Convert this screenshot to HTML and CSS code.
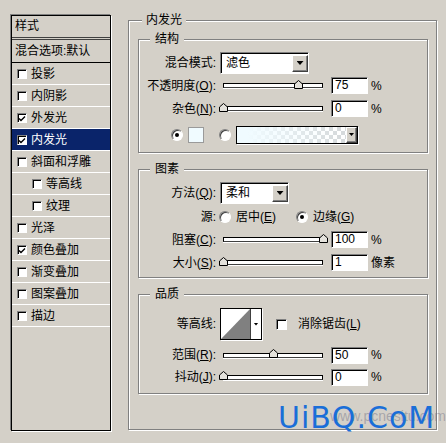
FILE: index.html
```html
<!DOCTYPE html>
<html lang="zh-CN">
<head>
    <meta charset="UTF-8">
    <title>图层样式 - 内发光</title>
    <link rel="stylesheet" href="styles.css">
</head>
<body>
    <div class="dialog">
        <div class="styles">
            <div class="list-head">样式</div>
            <div class="list-blend">混合选项:默认</div>
            <div class="item"><span class="cb"></span>投影</div>
            <div class="item"><span class="cb"></span>内阴影</div>
            <div class="item"><span class="cb"><svg width="8" height="8"><polyline points="1,3.5 3,5.5 7,1.5" fill="none" stroke="#000" stroke-width="1.4"/></svg></span>外发光</div>
            <div class="item active"><span class="cb"><svg width="8" height="8"><polyline points="1,3.5 3,5.5 7,1.5" fill="none" stroke="#000" stroke-width="1.4"/></svg></span>内发光</div>
            <div class="item"><span class="cb"></span>斜面和浮雕</div>
            <div class="item sub"><span class="cb"></span>等高线</div>
            <div class="item sub"><span class="cb"></span>纹理</div>
            <div class="item"><span class="cb"></span>光泽</div>
            <div class="item"><span class="cb"><svg width="8" height="8"><polyline points="1,3.5 3,5.5 7,1.5" fill="none" stroke="#000" stroke-width="1.4"/></svg></span>颜色叠加</div>
            <div class="item"><span class="cb"></span>渐变叠加</div>
            <div class="item"><span class="cb"></span>图案叠加</div>
            <div class="item"><span class="cb"></span>描边</div>
        </div>

        <div class="effect">
            <span class="title outer-title">内发光</span>

            <div class="group g-struct">
                <span class="title">结构</span>
                <div class="row">
                    <span class="lbl">混合模式:</span>
                    <div class="sel sel-wide"><span class="sel-text">滤色</span><span class="dd"></span></div>
                </div>
                <div class="row">
                    <span class="lbl">不透明度(<u>O</u>):</span>
                    <div class="slider"><span class="track"></span><svg class="thumb" style="left:75px" width="9" height="9"><polygon points="0.5,8.5 0.5,4 4.5,0.5 8.5,4 8.5,8.5" fill="#e4e2dc" stroke="#000"/></svg></div>
                    <span class="num">75</span><span class="unit">%</span>
                </div>
                <div class="row">
                    <span class="lbl">杂色(<u>N</u>):</span>
                    <div class="slider"><span class="track"></span><svg class="thumb" style="left:0px" width="9" height="9"><polygon points="0.5,8.5 0.5,4 4.5,0.5 8.5,4 8.5,8.5" fill="#e4e2dc" stroke="#000"/></svg></div>
                    <span class="num">0</span><span class="unit">%</span>
                </div>
                <div class="row colors">
                    <span class="radio on"></span>
                    <span class="swatch"></span>
                    <span class="radio gap"></span>
                    <div class="grad"><span class="grad-fill"></span><span class="dd small"></span></div>
                </div>
            </div>

            <div class="group g-elem">
                <span class="title">图素</span>
                <div class="row">
                    <span class="lbl">方法(<u>Q</u>):</span>
                    <div class="sel sel-short"><span class="sel-text">柔和</span><span class="dd"></span></div>
                </div>
                <div class="row nudge">
                    <span class="lbl">源:</span>
                    <span class="opt opt-first"><span class="radio"></span><span class="opt-text">居中(<u>E</u>)</span></span>
                    <span class="opt"><span class="radio on"></span><span class="opt-text">边缘(<u>G</u>)</span></span>
                </div>
                <div class="row">
                    <span class="lbl">阻塞(<u>C</u>):</span>
                    <div class="slider"><span class="track"></span><svg class="thumb" style="left:100px" width="9" height="9"><polygon points="0.5,8.5 0.5,4 4.5,0.5 8.5,4 8.5,8.5" fill="#e4e2dc" stroke="#000"/></svg></div>
                    <span class="num">100</span><span class="unit">%</span>
                </div>
                <div class="row">
                    <span class="lbl">大小(<u>S</u>):</span>
                    <div class="slider"><span class="track"></span><svg class="thumb" style="left:0px" width="9" height="9"><polygon points="0.5,8.5 0.5,4 4.5,0.5 8.5,4 8.5,8.5" fill="#e4e2dc" stroke="#000"/></svg></div>
                    <span class="num">1</span><span class="unit">像素</span>
                </div>
            </div>

            <div class="group g-quality">
                <span class="title">品质</span>
                <div class="row tall">
                    <span class="lbl">等高线:</span>
                    <div class="contour">
                        <svg class="curve" width="29" height="30"><rect width="29" height="30" fill="#fff"/><polygon points="0,30 29,0 29,30" fill="#808080"/></svg>
                        <span class="contour-dd"></span>
                    </div>
                    <span class="cb big"></span>
                    <span class="opt-text">消除锯齿(<u>L</u>)</span>
                </div>
                <div class="row short first">
                    <span class="lbl">范围(<u>R</u>):</span>
                    <div class="slider"><span class="track"></span><svg class="thumb" style="left:50px" width="9" height="9"><polygon points="0.5,8.5 0.5,4 4.5,0.5 8.5,4 8.5,8.5" fill="#e4e2dc" stroke="#000"/></svg></div>
                    <span class="num">50</span><span class="unit">%</span>
                </div>
                <div class="row short">
                    <span class="lbl">抖动(<u>J</u>):</span>
                    <div class="slider"><span class="track"></span><svg class="thumb" style="left:0px" width="9" height="9"><polygon points="0.5,8.5 0.5,4 4.5,0.5 8.5,4 8.5,8.5" fill="#e4e2dc" stroke="#000"/></svg></div>
                    <span class="num">0</span><span class="unit">%</span>
                </div>
            </div>
        </div>

        <div class="mark-sub">www.pcnesitu.com</div>
        <div class="mark">UiBQ.CoM</div>
    </div>
</body>
</html>
```

FILE: styles.css
```css
body {
    margin: 0;
    background-color: #d4d0c8;
    font-family: "Liberation Sans", "Noto Sans CJK SC", sans-serif;
    font-size: 12px;
    line-height: 14px;
    color: #000;
}
.dialog {
    position: relative;
    display: flex;
    align-items: flex-start;
    width: 446px;
    height: 443px;
}

/* left style list */
.styles {
    margin: 15px 0 0 11px;
    width: 100px;
    height: 416px;
    box-sizing: border-box;
    border: 1px solid #000;
    box-shadow: -1px -1px 0 #808080, 1px 1px 0 #fff;
}
.list-head {
    height: 21px;
    line-height: 21px;
    padding-left: 3px;
    border-bottom: 3px double #404040;
}
.list-blend {
    height: 22px;
    line-height: 22px;
    padding-left: 3px;
    border-bottom: 1px solid #000;
}
.item {
    display: flex;
    align-items: center;
    height: 21px;
    padding-left: 5px;
    border-bottom: 1px solid #fff;
}
.item.sub {
    padding-left: 20px;
}
.item.active {
    background-color: #0a246a;
    color: #fff;
}
.cb {
    display: block;
    flex: none;
    width: 10px;
    height: 10px;
    margin-right: 4px;
    box-sizing: border-box;
    background: #fff;
    border: 1px solid;
    border-color: #808080 #fff #fff #808080;
    box-shadow: inset 1px 1px 0 #000;
    padding: 1px 0 0 0;
}
.cb svg {
    display: block;
}
.cb.big {
    width: 11px;
    height: 11px;
    margin: 0 6px 0 14px;
}

/* right effect panel */
.effect {
    position: relative;
    margin: 20px 0 0 17px;
    width: 309px;
    height: 410px;
    box-sizing: border-box;
    border: 1px solid #808080;
    box-shadow: 1px 1px 0 #fff, inset 1px 1px 0 #fff;
    padding: 18px 8px 0 9px;
}
.group {
    position: relative;
    box-sizing: border-box;
    border: 1px solid #808080;
    box-shadow: 1px 1px 0 #fff, inset 1px 1px 0 #fff;
}
.group + .group {
    margin-top: 16px;
}
.g-struct {
    height: 114px;
    padding-top: 11px;
}
.g-elem {
    height: 109px;
    padding-top: 11px;
}
.g-quality {
    height: 100px;
    padding-top: 13px;
}
.title {
    position: absolute;
    top: -8px;
    left: 11px;
    padding: 0 5px;
    line-height: 14px;
    background-color: #d4d0c8;
}
.outer-title {
    left: 13px;
    padding: 0 4px;
}

.row {
    display: flex;
    align-items: center;
    height: 23px;
}
.row.colors {
    margin-top: 3px;
    padding-left: 32px;
}
.row.nudge {
    margin-top: 1px;
}
.row.tall {
    height: 32px;
}
.row.short {
    height: 22px;
}
.row.first {
    margin-top: 4px;
}
.lbl {
    flex: none;
    width: 77px;
    text-align: right;
}

/* select boxes */
.sel {
    display: flex;
    margin-left: 4px;
    height: 22px;
    box-sizing: border-box;
    background: #fff;
    border: 1px solid;
    border-color: #808080 #fff #fff #808080;
    box-shadow: inset 1px 1px 0 #000;
    padding: 2px 0 1px 2px;
}
.sel-wide {
    width: 89px;
}
.sel-short {
    width: 69px;
}
.sel-text {
    flex: 1;
    padding-left: 3px;
    line-height: 17px;
}
.dd {
    display: flex;
    align-items: center;
    justify-content: center;
    width: 16px;
    box-sizing: border-box;
    background-color: #d4d0c8;
    border: 1px solid;
    border-color: #fff #404040 #404040 #fff;
    box-shadow: inset -1px -1px 0 #808080;
}
.dd::after {
    content: "";
    width: 7px;
    height: 4px;
    background: #000;
    clip-path: polygon(0 0, 100% 0, 50% 100%);
}
.dd.small {
    width: 11px;
}
.dd.small::after {
    width: 5px;
    height: 3px;
}

/* sliders and fields */
.slider {
    position: relative;
    display: flex;
    align-items: center;
    width: 108px;
    height: 18px;
    margin-left: 3px;
    padding: 0 4px;
    box-sizing: border-box;
}
.track {
    flex: 1;
    height: 5px;
    box-sizing: border-box;
    background: #fff;
    border: 1px solid #000;
    border-bottom-color: #404040;
    box-shadow: 0 1px 0 #fff;
}
.thumb {
    position: absolute;
    top: 3px;
}
.num {
    width: 37px;
    height: 17px;
    margin-left: 4px;
    box-sizing: border-box;
    background: #fff;
    border: 1px solid;
    border-color: #808080 #fff #fff #808080;
    box-shadow: inset 1px 1px 0 #000;
    padding-left: 3px;
    line-height: 15px;
}
.unit {
    margin-left: 3px;
}

/* colour choice */
.radio {
    display: flex;
    align-items: center;
    justify-content: center;
    flex: none;
    width: 12px;
    height: 12px;
    box-sizing: border-box;
    border-radius: 50%;
    background: #fff;
    border: 1px solid;
    border-color: #808080 #fff #fff #808080;
    box-shadow: inset 1px 1px 0 #404040, 0 0 0 0.5px #d4d0c8;
}
.radio.on::after {
    content: "";
    width: 4px;
    height: 4px;
    border-radius: 50%;
    background: #000;
}
.radio.gap {
    margin-left: 15px;
}
.swatch {
    width: 16px;
    height: 16px;
    margin-left: 5px;
    box-sizing: border-box;
    border: 1px solid #9a9a9a;
    background-color: #f0fbff;
}
.grad {
    display: flex;
    width: 122px;
    height: 18px;
    margin-left: 5px;
    box-sizing: border-box;
    border: 1px solid #000;
    box-shadow: 1px 1px 0 #fff;
}
.grad-fill {
    flex: 1;
    background:
        linear-gradient(to right, #f0fbff 10%, rgba(240, 251, 255, 0) 95%),
        repeating-conic-gradient(#d6dadc 0 25%, #fff 0 50%) 0 0 / 8px 8px;
}

.opt {
    display: flex;
    align-items: center;
    width: 77px;
}
.opt-first {
    margin-left: 3px;
}
.opt-text {
    margin-left: 5px;
}

/* contour picker */
.contour {
    display: flex;
    width: 42px;
    height: 32px;
    margin-left: 4px;
    box-sizing: border-box;
    border: 1px solid #000;
    box-shadow: 1px 1px 0 #fff;
    background: #fff;
}
.curve {
    display: block;
    border-right: 1px solid #404040;
}
.contour-dd {
    flex: 1;
    display: flex;
    align-items: center;
    justify-content: center;
}
.contour-dd::after {
    content: "";
    width: 5px;
    height: 3px;
    background: #000;
    clip-path: polygon(0 0, 100% 0, 50% 100%);
}

/* watermark */
.mark {
    position: absolute;
    left: 278px;
    top: 403px;
    font-family: "DejaVu Sans", sans-serif;
    font-size: 30px;
    line-height: 30px;
    letter-spacing: 1px;
    color: #1a6ed8;
}
.mark-sub {
    position: absolute;
    left: 330px;
    top: 409px;
    font-size: 14px;
    line-height: 14px;
    color: rgba(110, 110, 130, 0.45);
}
```
